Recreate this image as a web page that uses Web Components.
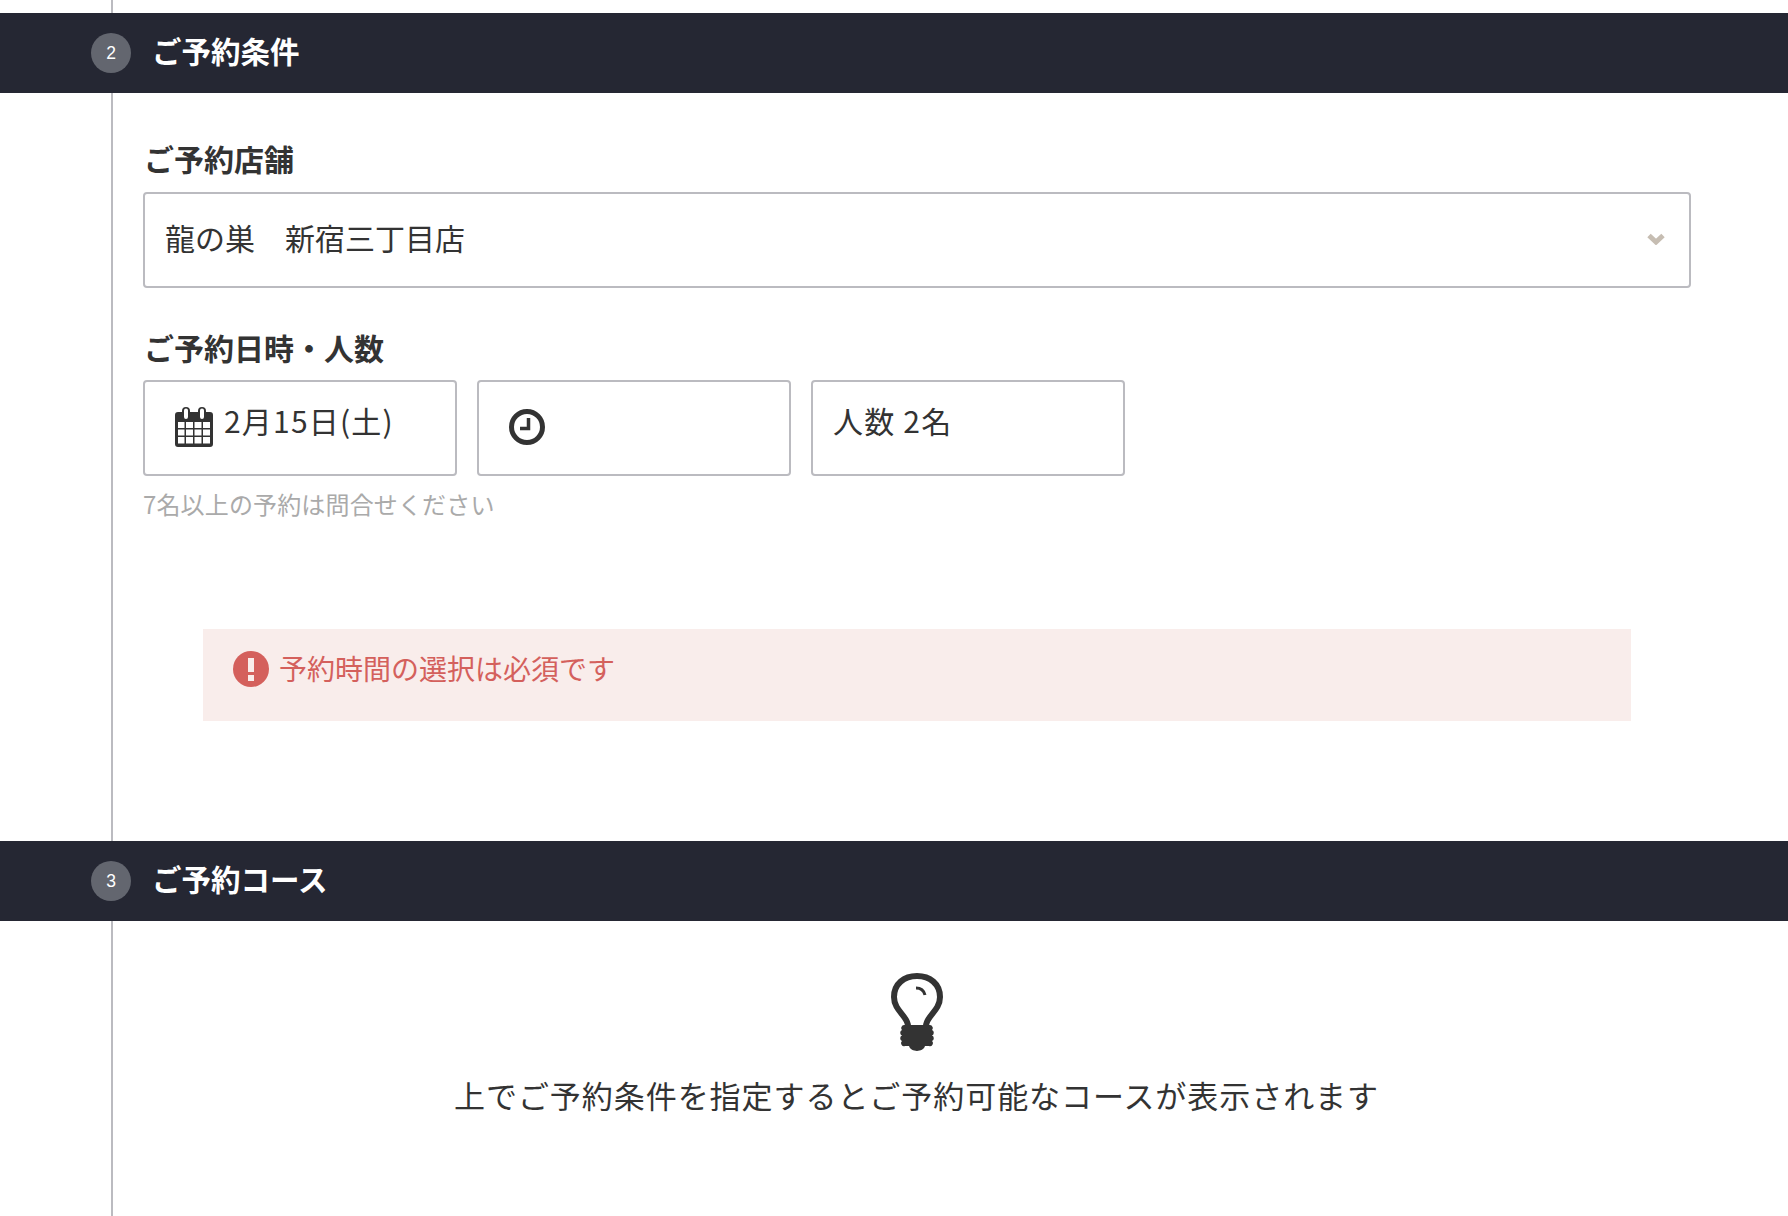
<!DOCTYPE html>
<html lang="ja"><head><meta charset="utf-8"><title>ご予約</title>
<style>
html,body{margin:0;padding:0;background:#fff}
body{font-family:"Noto Sans CJK JP","Noto Sans",sans-serif;color:#333;height:1216px;overflow:hidden}
</style></head><body>
<booking-page>
  <rail-gap></rail-gap>
  <section-bar step="2">ご予約条件</section-bar>
  <section-body>
    <field-label>ご予約店舗</field-label>
    <select-box>龍の巣　新宿三丁目店</select-box>
    <field-label class="second">ご予約日時・人数</field-label>
    <picker-row>
      <picker-box><ui-icon name="calendar" slot="icon"></ui-icon>2月15日(土)</picker-box>
      <picker-box kind="time"><ui-icon name="clock" slot="icon"></ui-icon></picker-box>
      <picker-box>人数 2名</picker-box>
    </picker-row>
    <hint-text>7名以上の予約は問合せください</hint-text>
    <alert-box>予約時間の選択は必須です</alert-box>
  </section-body>
  <section-bar step="3">ご予約コース</section-bar>
  <course-notice>上でご予約条件を指定するとご予約可能なコースが表示されます</course-notice>
</booking-page>
<script>
const def=(name,html,init)=>customElements.define(name,class extends HTMLElement{
  constructor(){super();const r=this.attachShadow({mode:'open'});r.innerHTML=html;init&&init(this,r);}
  connectedCallback(){this.init&&this.init();}
});
const ICONS={
calendar:`<svg width="38" height="40" viewBox="0 0 38 40"><path fill="#333" fill-rule="evenodd" d="M3 5h4V4a4 4 0 0 1 8 0v1h8V4a4 4 0 0 1 8 0v1h4a3 3 0 0 1 3 3v29a3 3 0 0 1-3 3H3a3 3 0 0 1-3-3V8a3 3 0 0 1 3-3zM9 3.500V10a2 2 0 0 0 4 0V3.500a2 2 0 0 0-4 0zM25 3.500V10a2 2 0 0 0 4 0V3.500a2 2 0 0 0-4 0zM3 15v6h6.500v-6zM11 15v6h7v-6zM19.500 15v6h7v-6zM28 15v6h7v-6zM3 22.500v6h6.500v-6zM11 22.500v6h7v-6zM19.500 22.500v6h7v-6zM28 22.500v6h7v-6zM3 30v6.500h6.500V30zM11 30v6.500h7V30zM19.500 30v6.500h7V30zM28 30v6.500h7V30z"/></svg>`,
clock:`<svg width="36" height="36" viewBox="0 0 36 36"><circle cx="18" cy="18" r="15.500" fill="none" stroke="#333" stroke-width="5"/><path fill="none" stroke="#333" stroke-width="3.500" d="M19.500 9v10.500H11"/></svg>`,
alert:`<svg width="36" height="36" viewBox="0 0 36 36"><circle cx="18" cy="18" r="18" fill="#d4605c"/><rect x="15" y="7" width="6" height="14" fill="#f9edeb"/><rect x="15" y="24" width="6" height="6" fill="#f9edeb"/></svg>`,
bulb:`<svg width="52" height="78" viewBox="0 0 52 78"><path fill="none" stroke="#333" stroke-width="6" d="M17 53c0-10-14-15-14-29C3 11 13 3 26 3s23 8 23 21c0 14-14 19-14 29"/><path fill="#333" d="M13 52h26a3 3 0 0 1 2 5 3 3 0 0 1 0 5.500 3 3 0 0 1 0 5.500 3 3 0 0 1-3 5h-4c-2 6.500-14 6.500-16 0h-4a3 3 0 0 1-3-5 3 3 0 0 1 0-5.500 3 3 0 0 1 0-5.500 3 3 0 0 1 2-5z"/><path fill="none" stroke="#333" stroke-width="3" d="M25 15c5 0 8 3 9 7"/></svg>`,
chevron:`<svg width="18" height="12" viewBox="0 0 18 12"><path fill="none" stroke="#c6bdb2" stroke-width="5" d="M2 2.500l7 6.500 7-6.500"/></svg>`
};
def('booking-page',`<style>:host{display:block;height:1216px;overflow:hidden}</style><slot></slot>`);
def('rail-gap',`<style>:host{display:block;height:13px;margin-left:111px;border-left:2px solid #bbbbc0}</style>`);
def('section-bar',`<style>
:host{display:flex;align-items:center;height:80px;background:#252733;padding-left:91px;gap:22px;color:#fff;font-weight:700;font-size:29.500px;box-sizing:border-box}
.t{margin-bottom:6px;margin-left:-1px}
.n{width:40px;height:40px;border-radius:50%;background:#63666f;display:flex;align-items:center;justify-content:center;font:400 17.500px "Liberation Sans",sans-serif}
</style><span class="n"></span><span class="t"><slot></slot></span>`,(h,r)=>{h.init=()=>{r.querySelector('.n').textContent=h.getAttribute('step')}});
def('section-body',`<style>:host{display:block;margin-left:111px;border-left:2px solid #bbbbc0;padding:45px 97px 120px 30px}</style><slot></slot>`);
def('field-label',`<style>:host{display:block;font-weight:700;font-size:30px;line-height:40px;color:#333;margin-bottom:14px;padding-left:1px}
:host(.second){margin-top:39px;margin-bottom:13px}</style><slot></slot>`);
def('select-box',`<style>:host{display:flex;align-items:center;justify-content:space-between;box-sizing:border-box;width:1548px;height:96px;border:2px solid #bbbbc0;border-radius:4px;padding:0 24px 6px 20px;font-size:30px}
#i{margin-top:4px}</style><span><slot></slot></span><span id="i" style="display:flex"></span>`,(h,r)=>{r.getElementById('i').innerHTML=ICONS.chevron});
def('picker-row',`<style>:host{display:flex;gap:20px}</style><slot></slot>`);
def('picker-box',`<style>:host{display:flex;align-items:flex-start;box-sizing:border-box;width:314px;height:96px;border:2px solid #bbbbc0;border-radius:4px;padding:18px 20px 0;font-size:30px;letter-spacing:1.200px;line-height:40px}
::slotted(ui-icon){margin:7px 11px 0 10px}
:host([kind=time]) ::slotted(ui-icon){margin:9px 0 0 10px}
</style><slot name="icon"></slot><span><slot></slot></span>`);
def('ui-icon',`<style>:host{display:block;line-height:0;flex:none}</style><span id="i"></span>`,(h,r)=>{h.init=()=>{r.getElementById('i').innerHTML=ICONS[h.getAttribute('name')]}});
def('hint-text',`<style>:host{display:block;margin-top:11px;font-size:24px;line-height:34px;color:#aaa;letter-spacing:.150px}</style><slot></slot>`);
def('alert-box',`<style>:host{display:flex;align-items:flex-start;gap:10px;box-sizing:border-box;margin:108px 60px 0;height:92px;background:#f9edeb;color:#d4605c;padding:22px 30px 0;font-size:28px;line-height:34px}
#i{display:flex;margin-top:0}</style><span id="i"></span><span><slot></slot></span>`,(h,r)=>{r.getElementById('i').innerHTML=ICONS.alert});
def('course-notice',`<style>:host{display:flex;flex-direction:column;align-items:center;margin-left:111px;border-left:2px solid #bbbbc0;height:295px;box-sizing:border-box;padding:52px 68px 0 0;font-size:31px;letter-spacing:.950px;color:#333}
#i{display:flex}
p{margin:23px 0 0;line-height:42px}
</style><div id="i"></div><p><slot></slot></p>`,(h,r)=>{r.getElementById('i').innerHTML=ICONS.bulb});
</script>
</body></html>
